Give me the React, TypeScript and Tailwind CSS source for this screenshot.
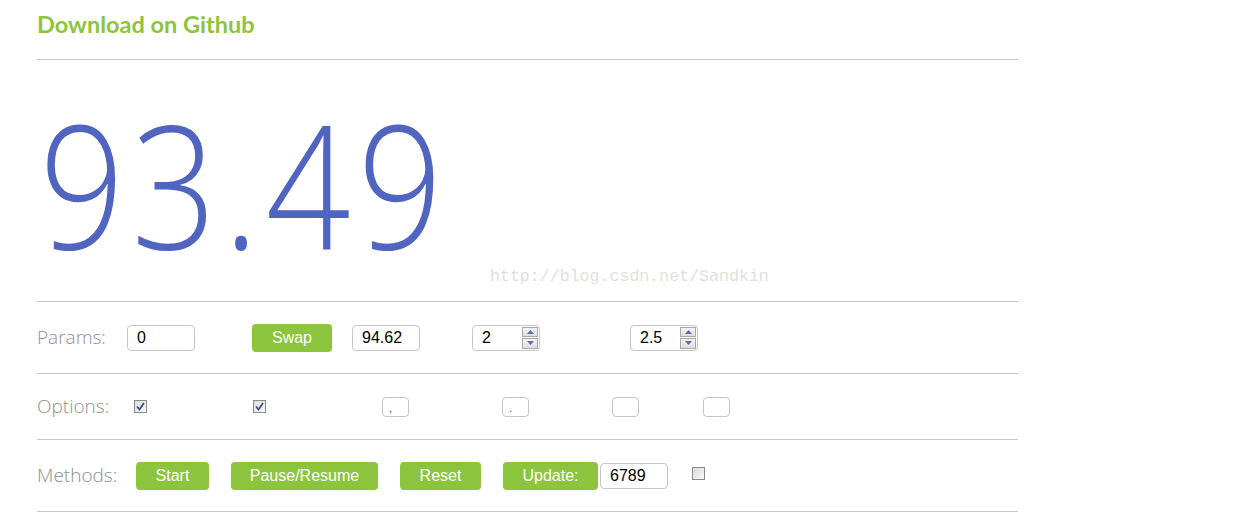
import React from 'react';

const green = 'bg-[#8cc43e]';
const btnClass = `${green} h-7 rounded-[4px] text-white text-[16px] font-['Liberation_Sans',Arial,sans-serif] flex items-center justify-center`;
const inputClass = "h-[26px] w-[68px] rounded-[4px] border border-[#c6c6c6] bg-white px-[9px] text-[16px] text-black font-['Liberation_Sans',Arial,sans-serif] outline-none";
const labelClass = "text-[19px] font-light text-[#8f8f8f] font-['Open_Sans',sans-serif]";

const Checkbox = ({ checked }: { checked: boolean }) => (
  <span className="flex h-[13px] w-[13px] items-center justify-center border border-[#8a8a8a] bg-gradient-to-br from-[#dcdcdc] to-[#f8f8f8]">
    {checked && (
      <svg width="9" height="9" viewBox="0 0 9 9">
        <path d="M1 4.5 L3.5 7.5 L8 1" fill="none" stroke="#3b4f8f" strokeWidth="1.8" />
      </svg>
    )}
  </span>
);

const NumberBox = ({ value }: { value: string }) => (
  <div className="relative">
    <input readOnly value={value} className={inputClass} />
    <div className="absolute right-[2px] top-[2px] flex h-[22px] w-[16px] flex-col gap-[1px]">
      {[0, 1].map((i) => (
        <span
          key={i}
          className="flex flex-1 items-center justify-center border border-[#a9a9a9] bg-gradient-to-b from-[#f4f4f4] to-[#dedede]"
        >
          <svg width="7" height="4" viewBox="0 0 7 4">
            <path d={i === 0 ? 'M0 4 L3.5 0 L7 4 Z' : 'M0 0 L3.5 4 L7 0 Z'} fill="#5b6fb0" />
          </svg>
        </span>
      ))}
    </div>
  </div>
);

const SmallBox = ({ value }: { value: string }) => (
  <span className="flex h-[20px] w-[27px] items-end rounded-[4px] border border-[#c6c6c6] bg-white px-[6px] pb-[2px] text-[11px] leading-none text-[#1a4f8a] font-['Liberation_Sans',Arial,sans-serif]">
    {value}
  </span>
);

export default function App() {
  return (
    <div className="min-h-[528px] bg-white">
      <div className="relative ml-[37px] w-[981px]">
        <h1 className="pt-[9px] text-[23.5px] font-bold leading-[30px] text-[#8cc43e] font-['Lato',sans-serif]">
          Download on Github
        </h1>
        <hr className="mt-[20px] border-t border-[#c8c8c8]" />

        <div className="mt-[37px] mb-[33px] h-[171px] origin-left scale-x-[0.87] pl-[3px] text-[171px] font-light leading-[171px] tracking-[8px] text-[#5065c0] font-['Open_Sans',sans-serif]">
          93.49
        </div>
        <span className="absolute left-[453px] top-[265px] text-[16.6px] text-[#e2dfda] font-['Liberation_Mono',monospace]">
          http://blog.csdn.net/Sandkin
        </span>

        <hr className="border-t border-[#c8c8c8]" />
        <div className="flex h-[71px] items-center">
          <span className={`${labelClass} w-[90px]`}>Params:</span>
          <input readOnly value="0" className={inputClass} />
          <button className={`${btnClass} ml-[57px] w-[80px]`}>Swap</button>
          <input readOnly value="94.62" className={`${inputClass} ml-[20px]`} />
          <div className="ml-[52px]">
            <NumberBox value="2" />
          </div>
          <div className="ml-[90px]">
            <NumberBox value="2.5" />
          </div>
        </div>

        <hr className="border-t border-[#c8c8c8]" />
        <div className="flex h-[65px] items-center">
          <span className={`${labelClass} w-[97px]`}>Options:</span>
          <Checkbox checked />
          <span className="ml-[106px]">
            <Checkbox checked />
          </span>
          <span className="ml-[116px]">
            <SmallBox value="," />
          </span>
          <span className="ml-[93px]">
            <SmallBox value="." />
          </span>
          <span className="ml-[83px]">
            <SmallBox value="" />
          </span>
          <span className="ml-[64px]">
            <SmallBox value="" />
          </span>
        </div>

        <hr className="border-t border-[#c8c8c8]" />
        <div className="flex h-[71px] items-center">
          <span className={`${labelClass} w-[99px]`}>Methods:</span>
          <button className={`${btnClass} w-[73px]`}>Start</button>
          <button className={`${btnClass} ml-[22px] w-[147px]`}>Pause/Resume</button>
          <button className={`${btnClass} ml-[22px] w-[81px]`}>Reset</button>
          <button className={`${btnClass} ml-[22px] w-[95px]`}>Update:</button>
          <input readOnly value="6789" className={`${inputClass} ml-[2px]`} />
          <span className="ml-[24px] -mt-[5px]">
            <Checkbox checked={false} />
          </span>
        </div>
        <hr className="border-t border-[#c8c8c8]" />
      </div>
    </div>
  );
}
